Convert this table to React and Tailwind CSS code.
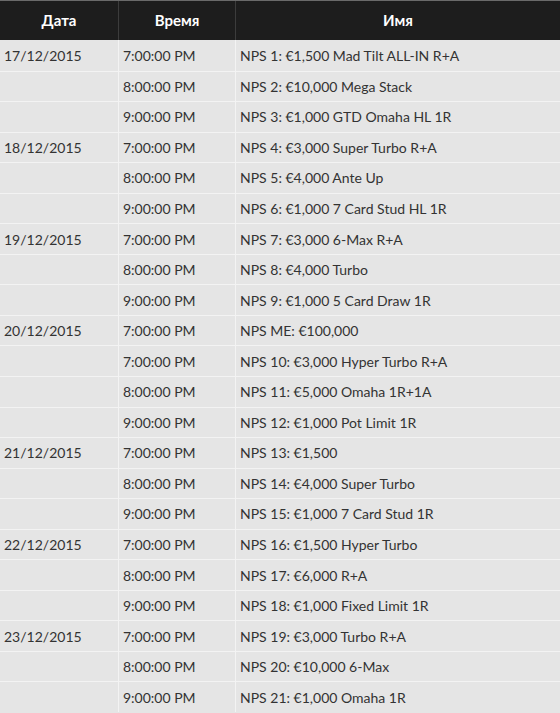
import React from "react";

const schedule = [
  ["17/12/2015", [
    ["7:00:00 PM", "NPS 1: €1,500 Mad Tilt ALL-IN R+A"],
    ["8:00:00 PM", "NPS 2: €10,000 Mega Stack"],
    ["9:00:00 PM", "NPS 3: €1,000 GTD Omaha HL 1R"],
  ]],
  ["18/12/2015", [
    ["7:00:00 PM", "NPS 4: €3,000 Super Turbo R+A"],
    ["8:00:00 PM", "NPS 5: €4,000 Ante Up"],
    ["9:00:00 PM", "NPS 6: €1,000 7 Card Stud HL 1R"],
  ]],
  ["19/12/2015", [
    ["7:00:00 PM", "NPS 7: €3,000 6-Max R+A"],
    ["8:00:00 PM", "NPS 8: €4,000 Turbo"],
    ["9:00:00 PM", "NPS 9: €1,000 5 Card Draw 1R"],
  ]],
  ["20/12/2015", [
    ["7:00:00 PM", "NPS ME: €100,000"],
    ["7:00:00 PM", "NPS 10: €3,000 Hyper Turbo R+A"],
    ["8:00:00 PM", "NPS 11: €5,000 Omaha 1R+1A"],
    ["9:00:00 PM", "NPS 12: €1,000 Pot Limit 1R"],
  ]],
  ["21/12/2015", [
    ["7:00:00 PM", "NPS 13: €1,500"],
    ["8:00:00 PM", "NPS 14: €4,000 Super Turbo"],
    ["9:00:00 PM", "NPS 15: €1,000 7 Card Stud 1R"],
  ]],
  ["22/12/2015", [
    ["7:00:00 PM", "NPS 16: €1,500 Hyper Turbo"],
    ["8:00:00 PM", "NPS 17: €6,000 R+A"],
    ["9:00:00 PM", "NPS 18: €1,000 Fixed Limit 1R"],
  ]],
  ["23/12/2015", [
    ["7:00:00 PM", "NPS 19: €3,000 Turbo R+A"],
    ["8:00:00 PM", "NPS 20: €10,000 6-Max"],
    ["9:00:00 PM", "NPS 21: €1,000 Omaha 1R"],
  ]],
];

export default function App() {
  // flatten: date only shown on the first row of each day
  const rows = [];
  schedule.forEach(([date, events]) => {
    events.forEach(([time, name], i) => {
      rows.push({ date: i === 0 ? date : "", time, name });
    });
  });

  return (
    <div className="w-[560px] h-[713px] overflow-hidden bg-[#e5e5e5] font-['Lato',sans-serif]">
      <div className="flex h-[40px] bg-[#1d1d1d] border-t border-[#6a6a6a] text-white font-bold text-[15px]">
        <div className="w-[119px] flex items-center justify-center border-r border-[#3c3c3c]">Дата</div>
        <div className="w-[117px] flex items-center justify-center border-r border-[#3c3c3c]">Время</div>
        <div className="flex-1 flex items-center justify-center">Имя</div>
      </div>

      {rows.map((row, idx) => (
        <div
          key={idx}
          className={`flex h-[30.55px] text-[14px] text-[#333333] ${idx > 0 ? "border-t border-[#f3f3f3]" : ""}`}
        >
          <div className="w-[119px] flex items-center pl-[4px] border-r border-[#f3f3f3]">{row.date}</div>
          <div className="w-[117px] flex items-center pl-[4px] border-r border-[#f3f3f3]">{row.time}</div>
          <div className="flex-1 flex items-center pl-[4px]">{row.name}</div>
        </div>
      ))}
    </div>
  );
}
